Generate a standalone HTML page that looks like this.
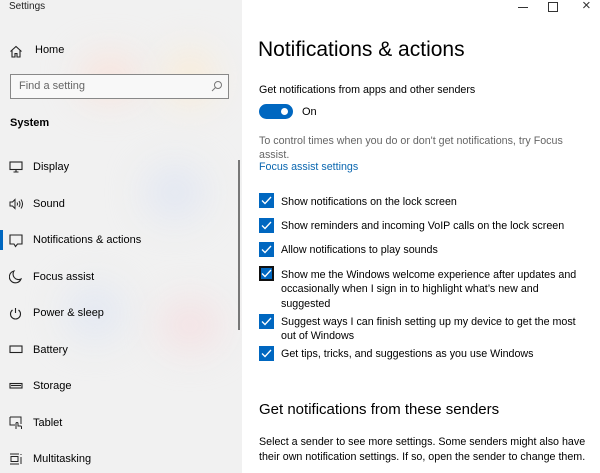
<!DOCTYPE html>
<html><head><meta charset="utf-8"><style>
*{margin:0;padding:0;box-sizing:border-box}
body{width:600px;height:473px;overflow:hidden;font-family:"Liberation Sans",sans-serif;background:#fff;position:relative;color:#000}
#side{position:absolute;left:0;top:0;width:242px;height:473px;background:#f1f1f1;overflow:hidden}
.blob{position:absolute;border-radius:50%;filter:blur(18px)}
.t{position:absolute;font-size:11px;white-space:nowrap}
.ic{position:absolute;left:9px}
#scroll{position:absolute;left:238px;top:160px;width:2px;height:170px;background:#777}
.cb{position:absolute;left:259px;width:15px;height:15px;background:#0067c0}
.cb svg{position:absolute;left:2px;top:3px}
.r{position:absolute;left:281px;font-size:10.7px;line-height:14.3px;color:#000;white-space:nowrap}
</style></head><body>
<div id="side">
<div class="blob" style="left:80px;top:55px;width:60px;height:45px;background:#f9e3db"></div>
<div class="blob" style="left:165px;top:50px;width:50px;height:55px;background:#f9ecd8"></div>
<div class="blob" style="left:145px;top:165px;width:60px;height:55px;background:#e2e7f2"></div>
<div class="blob" style="left:65px;top:285px;width:60px;height:55px;background:#e3e8f2"></div>
<div class="blob" style="left:160px;top:300px;width:60px;height:50px;background:#f4e1e3"></div>
<div class="t" style="left:9px;top:1px;font-size:10px;color:#222">Settings</div>
<svg class="ic" style="top:45px" width="14" height="13" viewBox="0 0 14 13" fill="none" stroke="#222" stroke-width="1.1"><path d="M1.5 6.5 7 1.5l5.5 5M3 5.5V12h3V8.5h2V12h3V5.5"/></svg>
<div class="t" style="left:35px;top:44px">Home</div>
<div style="position:absolute;left:10px;top:74px;width:219px;height:25px;border:1px solid #888;background:#f8f8f8"></div>
<div class="t" style="left:19px;top:80px;color:#666">Find a setting</div>
<svg style="position:absolute;left:211px;top:80px" width="12" height="12" viewBox="0 0 12 12" fill="none" stroke="#777" stroke-width="1"><circle cx="7" cy="5" r="3.5"/><path d="M4.5 7.5 1 11"/></svg>
<div class="t" style="left:10px;top:117px;font-weight:bold">System</div>
<svg class="ic" style="top:161px" width="14" height="12" viewBox="0 0 14 12" fill="none" stroke="#222" stroke-width="1.1"><rect x="1" y="1" width="12" height="7.5"/><path d="M7 8.5v2M4.5 11h5"/></svg>
<div class="t" style="left:33px;top:161px">Display</div>
<svg class="ic" style="top:198px" width="14" height="12" viewBox="0 0 14 12" fill="none" stroke="#222" stroke-width="1"><path d="M1 4h2.5L6 1.5v9L3.5 8H1zM8 4.5q1 1.5 0 3M10 3q2 3 0 6M12 1.5q3 4.5 0 9"/></svg>
<div class="t" style="left:33px;top:198px">Sound</div>
<div style="position:absolute;left:0;top:230px;width:3px;height:20px;background:#0067c0"></div>
<svg class="ic" style="top:234px" width="14" height="14" viewBox="0 0 14 14" fill="none" stroke="#222" stroke-width="1.1"><path d="M1 1h12v9H8.5L6.5 12.5 5 10H1z"/></svg>
<div class="t" style="left:33px;top:234px">Notifications &amp; actions</div>
<svg class="ic" style="top:270px" width="13" height="14" viewBox="0 0 13 14" fill="none" stroke="#222" stroke-width="1.1"><path d="M5 1a6 6 0 1 0 7 8A5.5 5.5 0 0 1 5 1z"/></svg>
<div class="t" style="left:33px;top:271px">Focus assist</div>
<svg class="ic" style="top:307px" width="13" height="13" viewBox="0 0 13 13" fill="none" stroke="#222" stroke-width="1.1"><path d="M6.5 1v5M3.5 3a5 5 0 1 0 6 0"/></svg>
<div class="t" style="left:33px;top:307px">Power &amp; sleep</div>
<svg class="ic" style="top:345px" width="14" height="9" viewBox="0 0 14 9" fill="none" stroke="#222" stroke-width="1.1"><rect x="1" y="1" width="12" height="6.5"/></svg>
<div class="t" style="left:33px;top:344px">Battery</div>
<svg class="ic" style="top:382px" width="14" height="8" viewBox="0 0 14 8" fill="none" stroke="#222" stroke-width="1.1"><rect x="1" y="1.5" width="12" height="4.5"/><path d="M2 3.5h10"/></svg>
<div class="t" style="left:33px;top:380px">Storage</div>
<svg class="ic" style="top:416px" width="14" height="14" viewBox="0 0 14 14" fill="none" stroke="#222" stroke-width="1"><path d="M1 1h11v7M1 1v8h5"/><path d="M7 13V7.5a1 1 0 0 1 2 0V10h2.5a1 1 0 0 1 1 1v2"/></svg>
<div class="t" style="left:33px;top:417px">Tablet</div>
<svg class="ic" style="top:453px" width="14" height="12" viewBox="0 0 14 12" fill="none" stroke="#222" stroke-width="1"><path d="M1 1h9M1 11h9M2 3.5h7v5H2zM12 1v1M12 4v7"/></svg>
<div class="t" style="left:33px;top:453px">Multitasking</div>
<div id="scroll"></div>
</div>
<div style="position:absolute;left:518px;top:7px;width:10px;border-top:1px solid #333"></div>
<div style="position:absolute;left:548px;top:2px;width:10px;height:10px;border:1px solid #333"></div>
<div style="position:absolute;left:582px;top:-3px;font-size:15px;color:#333">×</div>
<div class="t" style="left:258px;top:38px;font-size:21px">Notifications &amp; actions</div>
<div class="t" style="left:259px;top:84px;font-size:10.7px">Get notifications from apps and other senders</div>
<div style="position:absolute;left:259px;top:104px;width:34px;height:15px;border-radius:8px;background:#0067c0"></div>
<div style="position:absolute;left:281px;top:108px;width:7px;height:7px;border-radius:50%;background:#fff"></div>
<div class="t" style="left:302px;top:106px">On</div>
<div class="t" style="left:259px;top:134px;color:#666;line-height:14px;font-size:10.7px">To control times when you do or don't get notifications, try Focus<br>assist.</div>
<div class="t" style="left:259px;top:161px;color:#0b67b0;font-size:10.7px">Focus assist settings</div>
<div class="cb" style="top:193px"><svg width="11" height="9" viewBox="0 0 11 9" fill="none" stroke="#fff" stroke-width="1.3"><path d="M1 4.5 4 7.5 10 1"/></svg></div>
<div class="r" style="top:195px">Show notifications on the lock screen</div>
<div class="cb" style="top:218px"><svg width="11" height="9" viewBox="0 0 11 9" fill="none" stroke="#fff" stroke-width="1.3"><path d="M1 4.5 4 7.5 10 1"/></svg></div>
<div class="r" style="top:219px">Show reminders and incoming VoIP calls on the lock screen</div>
<div class="cb" style="top:242px"><svg width="11" height="9" viewBox="0 0 11 9" fill="none" stroke="#fff" stroke-width="1.3"><path d="M1 4.5 4 7.5 10 1"/></svg></div>
<div class="r" style="top:243px">Allow notifications to play sounds</div>
<div class="cb" style="top:266px;border:2px solid #111"><svg style="left:0;top:1px" width="11" height="9" viewBox="0 0 11 9" fill="none" stroke="#fff" stroke-width="1.3"><path d="M1 4.5 4 7.5 10 1"/></svg></div>
<div class="r" style="top:268px">Show me the Windows welcome experience after updates and<br>occasionally when I sign in to highlight what’s new and<br>suggested</div>
<div class="cb" style="top:314px"><svg width="11" height="9" viewBox="0 0 11 9" fill="none" stroke="#fff" stroke-width="1.3"><path d="M1 4.5 4 7.5 10 1"/></svg></div>
<div class="r" style="top:315px">Suggest ways I can finish setting up my device to get the most<br>out of Windows</div>
<div class="cb" style="top:346px"><svg width="11" height="9" viewBox="0 0 11 9" fill="none" stroke="#fff" stroke-width="1.3"><path d="M1 4.5 4 7.5 10 1"/></svg></div>
<div class="r" style="top:347px">Get tips, tricks, and suggestions as you use Windows</div>
<div class="t" style="left:259px;top:401px;font-size:15px">Get notifications from these senders</div>
<div class="t" style="left:259px;top:435px;line-height:14.5px;font-size:10.7px">Select a sender to see more settings. Some senders might also have<br>their own notification settings. If so, open the sender to change them.</div>
</body></html>
